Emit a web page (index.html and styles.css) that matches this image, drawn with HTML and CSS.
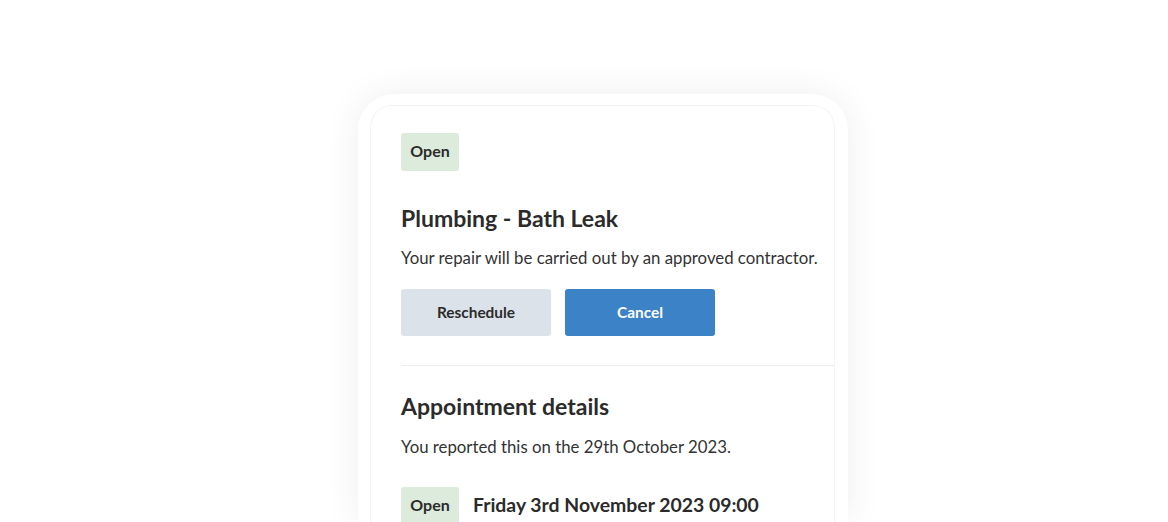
FILE: index.html
```html
<!DOCTYPE html>
<html lang="en">
<head>
<meta charset="utf-8">
<title>Repair</title>
<link rel="stylesheet" href="styles.css">
</head>
<body>
<div class="stage">
  <div class="phone">
    <div class="screen">
      <span class="badge">Open</span>
      <h1 class="title">Plumbing - Bath Leak</h1>
      <p class="text">Your repair will be carried out by an approved contractor.</p>
      <div class="actions">
        <button class="btn btn-secondary">Reschedule</button>
        <button class="btn btn-primary">Cancel</button>
      </div>
      <hr class="sep">
      <h2 class="subtitle">Appointment details</h2>
      <p class="text text-tight">You reported this on the 29th October 2023.</p>
      <div class="appt">
        <span class="badge">Open</span>
        <span class="appt-date">Friday 3rd November 2023 09:00</span>
      </div>
    </div>
  </div>
</div>
</body>
</html>
```
FILE: styles.css
```css
html, body {
  margin: 0;
  padding: 0;
  background: #ffffff;
  height: 522px;
  overflow: hidden;
}
body {
  font-family: "Lato", "Liberation Sans", sans-serif;
  color: #2b2b2b;
}
.stage {
  padding-top: 94px;
  padding-left: 358px;
}
.phone {
  width: 490px;
  height: 428px;
  box-sizing: border-box;
  background: #ffffff;
  border-radius: 36px 36px 0 0;
  box-shadow: 0 0 36px rgba(0, 0, 0, 0.07);
  padding: 11px 13px 0 12px;
}
.screen {
  height: 100%;
  box-sizing: border-box;
  border: 1px solid #f4f4f4;
  border-bottom: none;
  border-radius: 22px 22px 0 0;
  padding: 27px 0 0 30px;
  display: flex;
  flex-direction: column;
  align-items: flex-start;
  overflow: hidden;
}
.badge {
  display: inline-flex;
  align-items: center;
  justify-content: center;
  box-sizing: border-box;
  width: 58px;
  height: 38px;
  padding-bottom: 3px;
  background: #dcebdc;
  border-radius: 3px;
  font-size: 16px;
  font-weight: 700;
  color: #2b2b2b;
  flex-shrink: 0;
}
.title {
  margin: 33px 0 0;
  font-size: 23px;
  line-height: 28px;
  font-weight: 700;
}
.text {
  margin: 14px 0 0;
  font-size: 16.8px;
  line-height: 24px;
  color: #333333;
}
.text-tight {
  margin-top: 15px;
}
.actions {
  display: flex;
  gap: 14px;
  margin-top: 19px;
}
.btn {
  width: 150px;
  height: 47px;
  border: none;
  border-radius: 3px;
  font-family: inherit;
  font-size: 15.4px;
  font-weight: 700;
  padding-bottom: 2px;
  cursor: pointer;
}
.btn-secondary {
  background: #dce2ea;
  color: #2b2b2b;
}
.btn-primary {
  background: #3b82c6;
  color: #ffffff;
}
.sep {
  align-self: stretch;
  margin: 29px 0 0;
  border: none;
  border-top: 1px solid #eeeeee;
  height: 0;
}
.subtitle {
  margin: 26px 0 0;
  font-size: 23px;
  line-height: 28px;
  font-weight: 700;
}
.appt {
  display: flex;
  align-items: center;
  gap: 14px;
  margin-top: 28px;
}
.appt-date {
  font-size: 19.4px;
  font-weight: 700;
  margin-top: -4px;
}
```
